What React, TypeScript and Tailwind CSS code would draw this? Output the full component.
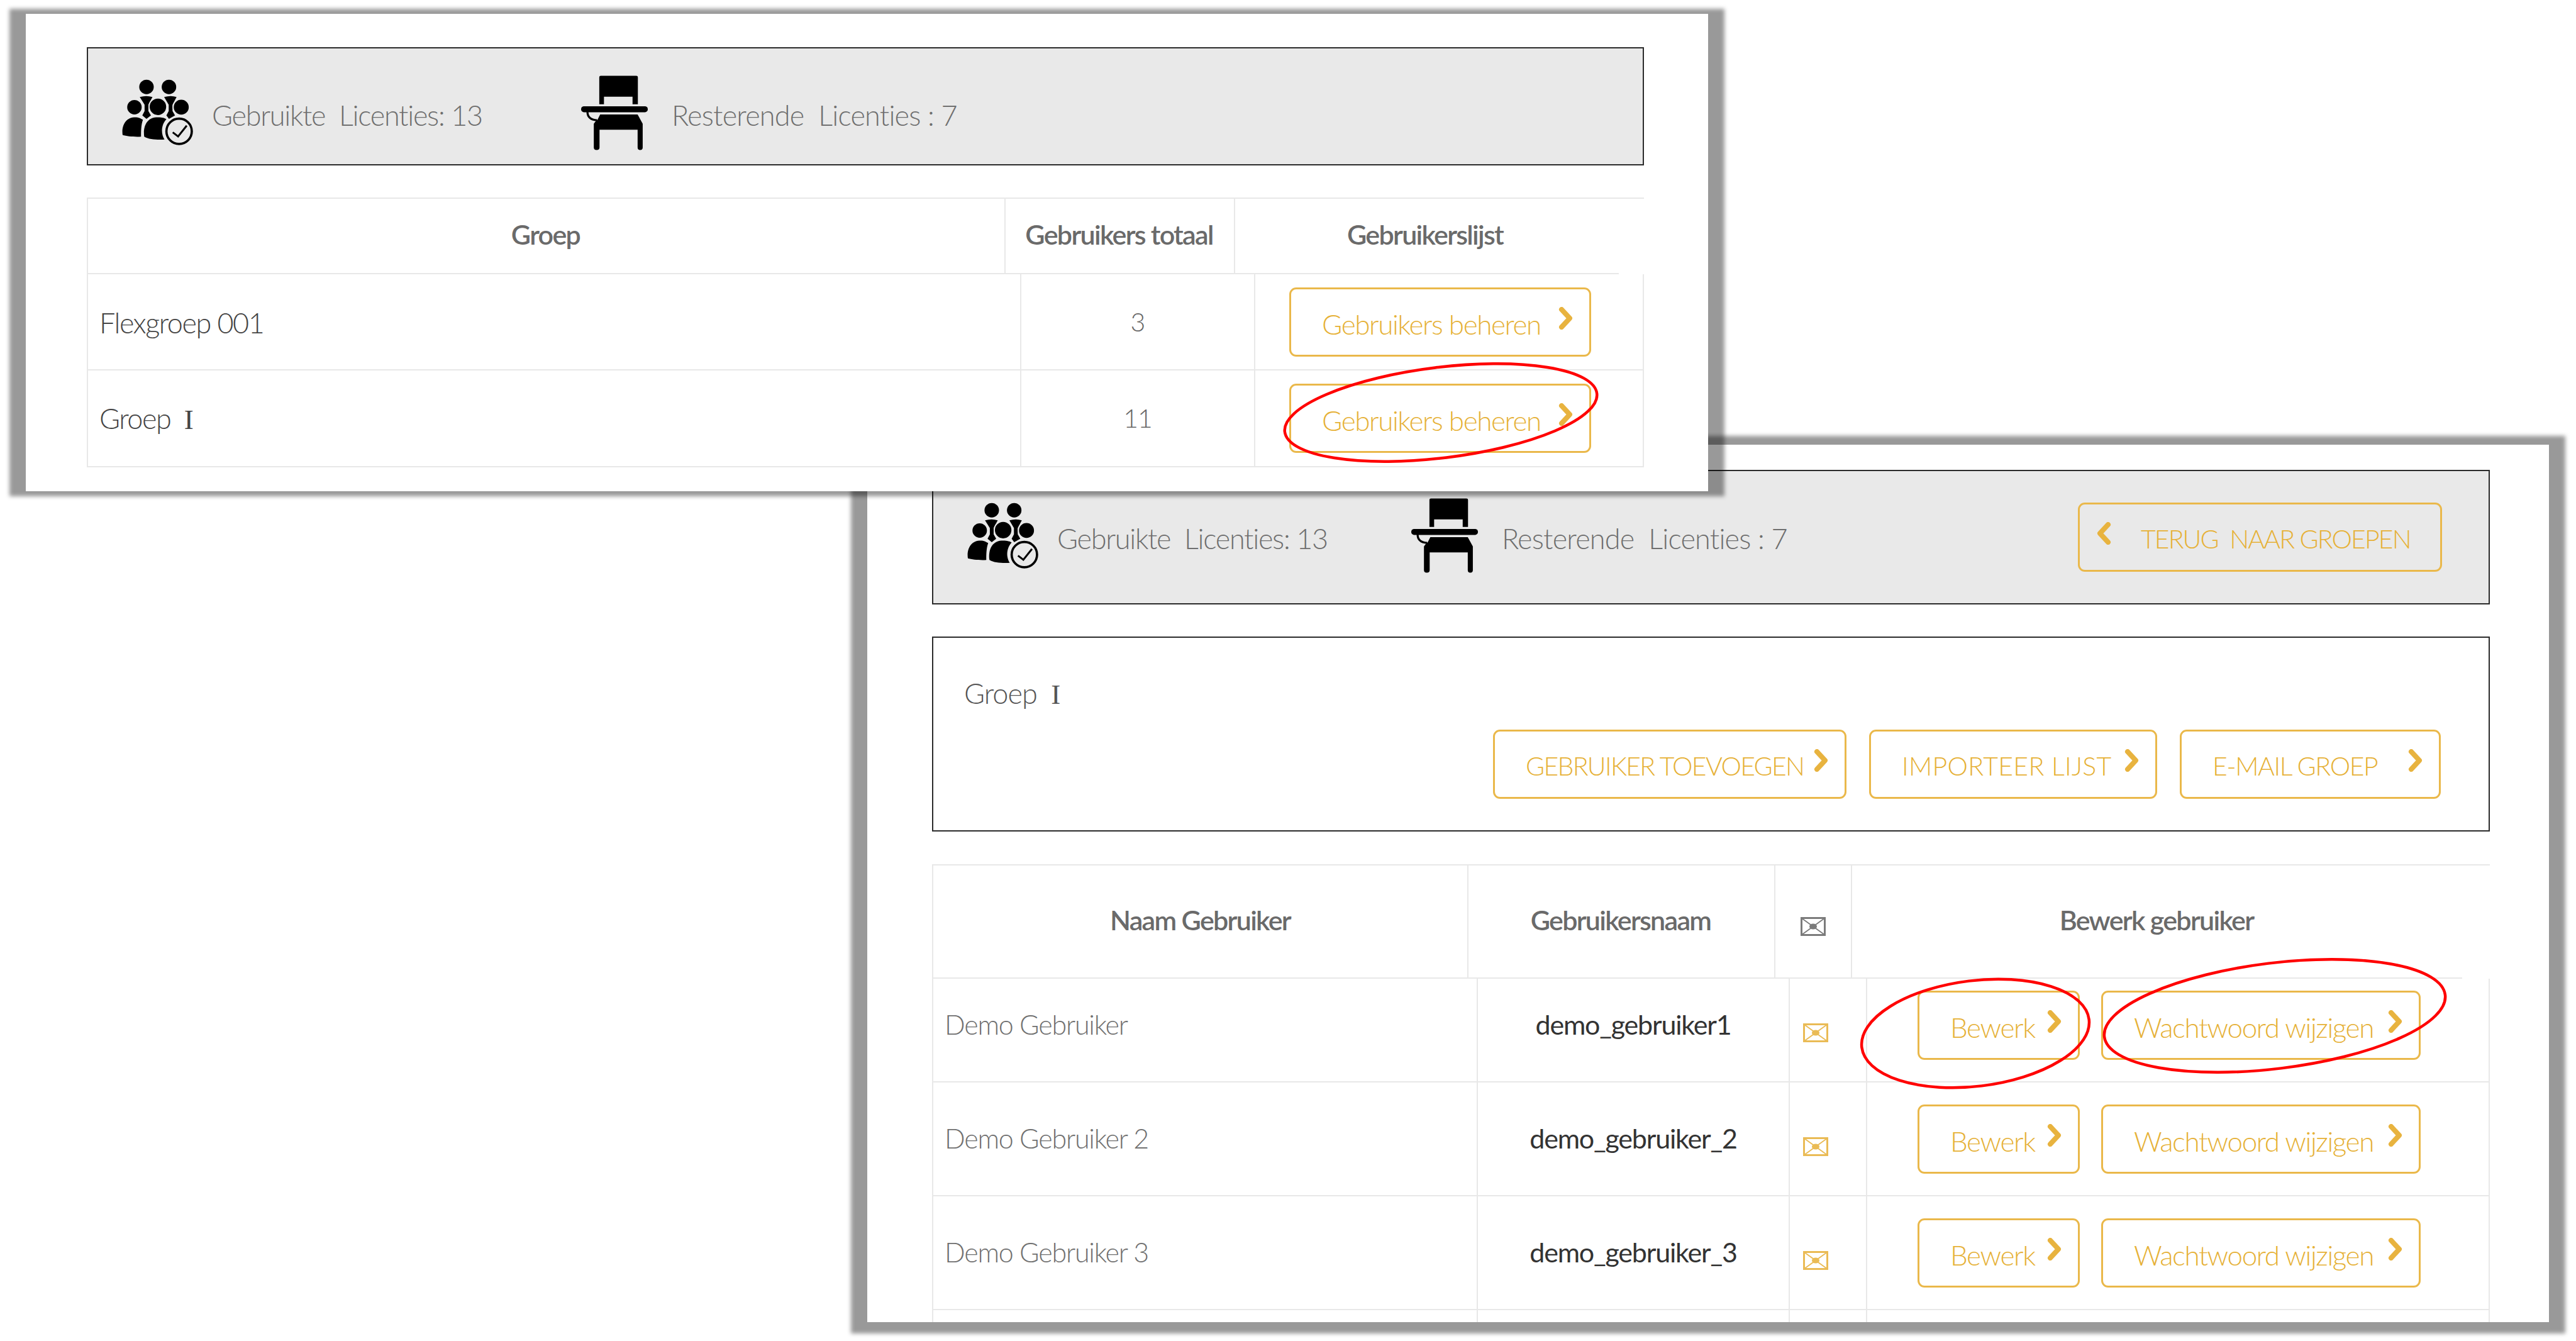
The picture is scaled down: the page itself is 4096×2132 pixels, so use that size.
import React from 'react';

const GOLD = '#e8b33f';

const Chevron: React.FC<{ left?: boolean }> = ({ left }) => (
  <svg width="24" height="36" viewBox="0 0 24 36" className="shrink-0 mb-[12px]">
    <path
      d={left ? 'M19 4 L6 18 L19 32' : 'M5 4 L18 18 L5 32'}
      fill="none"
      stroke={GOLD}
      strokeWidth="8"
      strokeLinecap="round"
      strokeLinejoin="round"
    />
  </svg>
);

const Button: React.FC<{ label: string; width: string; text?: string }> = ({
  label,
  width,
  text = 'text-[44px] tracking-[-1.4px]',
}) => (
  <div
    className={`${width} h-[110px] shrink-0 flex items-center justify-between pl-[49px] pr-[25px] border-[3px] border-[#eab84a] rounded-[11px] text-[#e6b137] font-light whitespace-pre ${text}`}
  >
    <span className="pt-[6px]">{label}</span>
    <Chevron />
  </div>
);

const PeopleIcon: React.FC = () => (
  <svg width="115" height="106" viewBox="0 0 570 525" className="shrink-0">
    <circle cx="193" cy="60" r="57" fill="#000" />
    <circle cx="370" cy="60" r="57" fill="#000" />
    <path d="M140 140 Q193 125 240 140 L208 200 V250 L228 285 L193 312 L160 285 L178 250 V200Z" fill="#000" />
    <path d="M332 140 Q385 125 430 140 L398 200 V250 L418 285 L370 312 L350 285 L368 250 V200Z" fill="#000" />
    <circle cx="98" cy="220" r="62" fill="#000" stroke="#e9e9e9" strokeWidth="10" />
    <circle cx="283" cy="217" r="70" fill="#000" stroke="#e9e9e9" strokeWidth="10" />
    <circle cx="467" cy="220" r="64" fill="#000" stroke="#e9e9e9" strokeWidth="10" />
    <path d="M5 440 C-5 380 20 305 95 300 C130 298 150 310 165 320 C150 360 150 410 150 452 C100 455 40 450 5 440Z" fill="#000" />
    <path d="M175 452 C165 380 190 305 270 300 C310 298 335 305 350 315 C315 350 300 420 335 475 C280 478 210 475 175 452Z" fill="#000" />
    <circle cx="450" cy="410" r="115" fill="#e9e9e9" />
    <circle cx="450" cy="410" r="100" fill="#e9e9e9" stroke="#000" strokeWidth="18" />
    <path d="M400 418 L442 450 L510 365" fill="none" stroke="#000" strokeWidth="15" />
  </svg>
);

const ChairIcon: React.FC = () => (
  <svg width="106" height="119" viewBox="0 0 525 585" className="shrink-0">
    <path d="M155 0 H435 Q447 0 447 12 V225 H405 V165 H180 V225 H143 V12 Q143 0 155 0Z" fill="#000" />
    <rect x="0" y="240" width="525" height="47" rx="22" fill="#000" />
    <path d="M150 305 H445 L485 378 V565 Q485 585 465 585 Q445 585 445 565 V425 H145 V565 Q145 585 122 585 Q100 585 100 565 V378 Q110 360 130 345Z" fill="#000" />
    <path d="M50 285 Q50 345 125 350" fill="none" stroke="#000" strokeWidth="16" />
  </svg>
);

const MailIcon: React.FC<{ color: string }> = ({ color }) => (
  <svg width="40" height="30" viewBox="0 0 40 30" className="shrink-0">
    <rect x="1.5" y="1.5" width="37" height="27" fill="none" stroke={color} strokeWidth="3" />
    <path d="M2 2 L38 28 M38 2 L2 28" stroke={color} strokeWidth="1.8" />
    <ellipse cx="20" cy="15" rx="6" ry="4.5" fill={color} />
  </svg>
);

const StatBar: React.FC<{ layout: string; chairGap: string; children?: React.ReactNode }> = ({
  layout,
  chairGap,
  children,
}) => (
  <div className={`${layout} flex items-center pl-[54px] bg-[#e9e9e9] border-2 border-[#2b2b2b] text-[#6f6f6f] text-[45px] font-light whitespace-pre`}>
    <PeopleIcon />
    <span className="ml-[28px] w-[432px] pt-[10px] tracking-[-1.3px]">Gebruikte  Licenties: 13</span>
    <div className={chairGap}>
      <ChairIcon />
    </div>
    <span className="ml-[38px] pt-[10px] tracking-[-0.8px]">Resterende  Licenties : 7</span>
    {children}
  </div>
);

const Panel: React.FC<{ position: string; shadow: string; children: React.ReactNode }> = ({
  position,
  shadow,
  children,
}) => (
  <div className={`absolute ${position}`}>
    <div className={`absolute ${shadow} bg-black/40 blur-[3px]`} />
    <div className="relative h-full bg-white overflow-hidden">{children}</div>
  </div>
);

// the original font draws a capital I with serifs
const GroupName: React.FC<{ name: string }> = ({ name }) =>
  name.endsWith(' I') ? (
    <span>
      {name.slice(0, -1)}
      <span className="font-['Liberation_Serif']">I</span>
    </span>
  ) : (
    <span>{name}</span>
  );

const groups = [
  { name: 'Flexgroep 001', total: '3', height: 'h-[153px]' },
  { name: 'Groep  I', total: '11', height: 'h-[154px]' },
];

const users = [
  { name: 'Demo Gebruiker', login: 'demo_gebruiker1', height: 'h-[165px]' },
  { name: 'Demo Gebruiker 2', login: 'demo_gebruiker_2', height: 'h-[181px]' },
  { name: 'Demo Gebruiker 3', login: 'demo_gebruiker_3', height: 'h-[181px]' },
];

const App: React.FC = () => {
  return (
    <div className="relative w-[4096px] h-[2132px] bg-white overflow-hidden font-[Lato,sans-serif]">
      {/* Second window: users of one group */}
      <Panel position="left-[1379px] top-[707px] w-[2674px] h-[1395px]" shadow="-inset-x-[26px] -top-[14px] -bottom-[18px]">
        <div className="pl-[103px] pr-[94px] pt-[40px]">
          <StatBar layout="h-[214px] pb-[5px]" chairGap="ml-[131px]">
            <div className="ml-auto mr-[74px] mt-[4px] w-[579px] h-[110px] flex items-center pl-[26px] border-[3px] border-[#eab84a] rounded-[11px] text-[#e6b137] text-[41px] tracking-[-1.9px]">
              <Chevron left />
              <span className="ml-[47px] pt-[6px]">TERUG  NAAR GROEPEN</span>
            </div>
          </StatBar>

          <div className="mt-[51px] h-[310px] border-2 border-[#2b2b2b] pt-[55px]">
            <div className="pl-[49px] h-[52px] text-[#555] text-[45px] font-light tracking-[-1px] whitespace-pre">
              <GroupName name="Groep  I" />
            </div>
            <div className="mt-[39px] pr-[76px] flex justify-end gap-[36px]">
              <Button label="GEBRUIKER TOEVOEGEN" width="w-[562px]" text="text-[41px] tracking-[-1.7px]" />
              <Button label="IMPORTEER LIJST" width="w-[458px]" text="text-[41px] tracking-[0.3px]" />
              <Button label="E-MAIL GROEP" width="w-[415px]" text="text-[41px] tracking-[-1.4px]" />
            </div>
          </div>

          <div className="mt-[52px] border-t-2 border-l-2 border-[#e8e8e8]">
            <div className="w-[2431px] h-[180px] grid grid-cols-[849px_488px_122px_1fr] border-b-2 border-[#e8e8e8] text-[#6a6a6a] text-[43px] font-semibold tracking-[-1.7px]">
              <div className="flex items-center justify-center pb-[3px]">Naam Gebruiker</div>
              <div className="flex items-center justify-center pb-[3px] pr-[2px] border-l-2 border-[#e8e8e8]">Gebruikersnaam</div>
              <div className="flex items-center justify-center pt-[16px] border-l-2 border-[#e8e8e8]">
                <MailIcon color="#7b7b7b" />
              </div>
              <div className="flex items-center justify-center pb-[3px] pr-[2px] border-l-2 border-[#e8e8e8]">Bewerk gebruiker</div>
            </div>
            {users.map(user => (
              <div key={user.login} className={`${user.height} grid grid-cols-[864px_496px_123px_1fr] border-b-2 border-r-2 border-[#e8e8e8]`}>
                <div className="flex items-end pl-[18px] pb-[64px] text-[#707070] text-[43px] font-light tracking-[-1.2px] leading-[52px]">{user.name}</div>
                <div className="flex items-end justify-center pb-[64px] border-l-2 border-[#e8e8e8] text-[#333] text-[43px] tracking-[-1.2px] leading-[52px]">{user.login}</div>
                <div className="flex items-end pl-[21px] pb-[62px] border-l-2 border-[#e8e8e8]">
                  <MailIcon color="#eabb55" />
                </div>
                <div className="flex items-end gap-[34px] pl-[80px] pb-[34px] border-l-2 border-[#e8e8e8]">
                  <Button label="Bewerk" width="w-[258px]" />
                  <Button label="Wachtwoord wijzigen" width="w-[508px]" />
                </div>
              </div>
            ))}
            <div className="h-[40px] grid grid-cols-[864px_496px_123px_1fr] border-r-2 border-[#e8e8e8]">
              <div />
              <div className="border-l-2 border-[#e8e8e8]" />
              <div className="border-l-2 border-[#e8e8e8]" />
              <div className="border-l-2 border-[#e8e8e8]" />
            </div>
          </div>
        </div>
      </Panel>

      {/* First window: group overview */}
      <Panel position="left-[41px] top-[22px] w-[2675px] h-[759px]" shadow="-inset-x-[26px] -inset-y-[8px]">
        <div className="pl-[97px] pr-[102px] pt-[53px]">
          <StatBar layout="h-[188px] pt-[20px]" chairGap="ml-[155px]" />

          <div className="mt-[51px] border-t-2 border-l-2 border-[#e8e8e8]">
            <div className="w-[2434px] h-[120px] grid grid-cols-[1457px_365px_1fr] border-b-2 border-[#e8e8e8] text-[#6a6a6a] text-[43px] font-semibold tracking-[-1.7px]">
              <div className="flex items-center justify-center pb-[4px] pr-[2px]">Groep</div>
              <div className="flex items-center justify-center pb-[4px] pr-[2px] border-l-2 border-[#e8e8e8]">Gebruikers totaal</div>
              <div className="flex items-center justify-center pb-[4px] pr-[6px] border-l-2 border-[#e8e8e8]">Gebruikerslijst</div>
            </div>
            {groups.map(group => (
              <div key={group.name} className={`${group.height} grid grid-cols-[1482px_372px_1fr] border-b-2 border-r-2 border-[#e8e8e8]`}>
                <div className="flex items-center pl-[18px] pt-[4px] text-[#444] text-[45px] font-light tracking-[-1.5px] whitespace-pre">
                  <GroupName name={group.name} />
                </div>
                <div className="flex items-center justify-center border-l-2 border-[#e8e8e8] text-[#666] text-[41px] font-light tracking-[-1px]">{group.total}</div>
                <div className="flex items-center pl-[54px] border-l-2 border-[#e8e8e8]">
                  <Button label="Gebruikers beheren" width="w-[480px]" />
                </div>
              </div>
            ))}
          </div>
        </div>
      </Panel>

      {/* Red marker circles drawn over the screenshots */}
      <svg width="4096" height="2132" viewBox="0 0 4096 2132" className="absolute inset-0 pointer-events-none">
        <g fill="none" stroke="#ff0000" strokeWidth="4.5">
          <ellipse cx="2291" cy="656" rx="250" ry="72" transform="rotate(-7 2291 656)" />
          <ellipse cx="3141" cy="1643" rx="182" ry="84" transform="rotate(-7 3141 1643)" />
          <ellipse cx="3617" cy="1615" rx="273" ry="84" transform="rotate(-7 3617 1615)" />
        </g>
      </svg>
    </div>
  );
};

export default App;
